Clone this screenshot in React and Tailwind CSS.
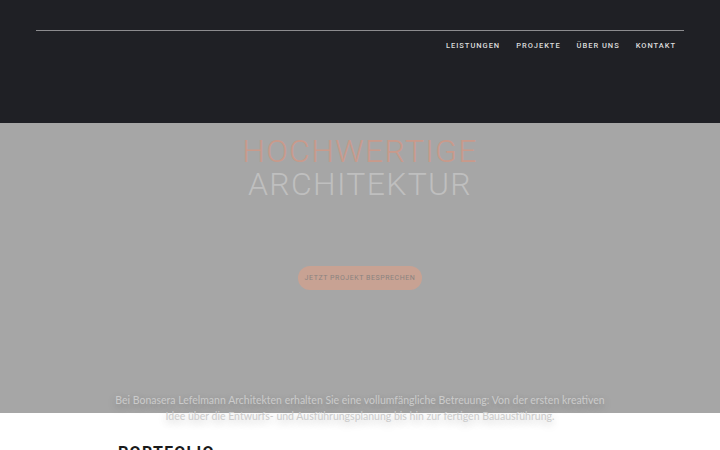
import React from 'react';

const navItems = ['Leistungen', 'Projekte', 'Über uns', 'Kontakt'];

function App() {
    return (
        <div className="min-h-screen bg-white font-['Lato',sans-serif]">
            {/* Header */}
            <header className="h-[123px] bg-[#1f2025] px-9 pt-[30px]">
                <div className="border-t border-[#8c8c8f]">
                    <nav className="flex justify-end gap-[16px] pr-2 pt-[9px]">
                        {navItems.map((item) => (
                            <a
                                key={item}
                                href="#"
                                className="font-['Roboto',sans-serif] text-[7.5px] font-medium uppercase tracking-[0.13em] text-[#dcdcdc]"
                            >
                                {item}
                            </a>
                        ))}
                    </nav>
                </div>
            </header>

            {/* Hero */}
            <section className="h-[290px] bg-[#a6a6a6] flex flex-col items-center">
                <h1 className="mt-[12px] shrink-0 flex flex-col items-center font-['Roboto',sans-serif] font-light text-[32px] leading-[33px] tracking-[0.04em]">
                    <span className="text-[#c99a8b]">HOCHWERTIGE</span>
                    <span className="text-[#bfbfbf]">ARCHITEKTUR</span>
                </h1>
                <button className="mt-[65px] shrink-0 flex h-[24px] w-[124px] items-center justify-center rounded-full bg-[#c8a293] font-['Roboto',sans-serif] text-[7px] uppercase tracking-[0.08em] text-[#8a8380]">
                    Jetzt Projekt besprechen
                </button>
                <p className="mt-[102px] shrink-0 w-[500px] text-center text-[10.5px] leading-[16px] text-[#cbcbcb] [text-shadow:0_3px_8px_rgba(0,0,0,0.25)]">
                    Bei Bonasera Lefelmann Architekten erhalten Sie eine vollumfängliche Betreuung: Von der ersten kreativen
                    Idee über die Entwurfs- und Ausführungsplanung bis hin zur fertigen Bauausführung.
                </p>
            </section>

            {/* Portfolio */}
            <section className="px-[118px] pt-[32px]">
                <h2 className="font-['Roboto',sans-serif] font-bold text-[16px] leading-none tracking-[0.08em] text-[#1a1a1a]">
                    PORTFOLIO
                </h2>
            </section>
        </div>
    );
}

export default App;
